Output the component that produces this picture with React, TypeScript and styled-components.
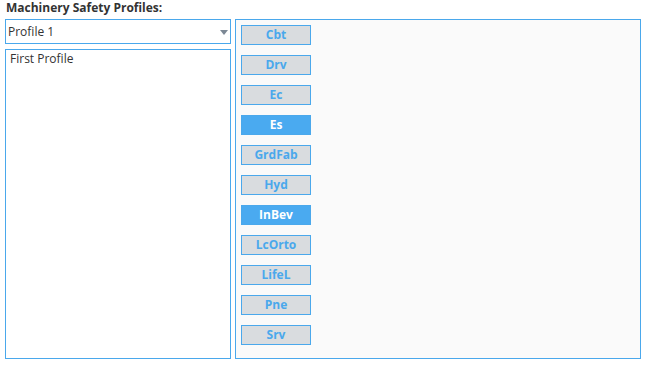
import React, { useState } from "react";
import styled, { createGlobalStyle } from "styled-components";

const Global = createGlobalStyle`
  html, body { margin: 0; padding: 0; background: #ffffff; }
  body { font-family: "Open Sans", "Noto Sans", sans-serif; }
`;

const Page = styled.div`
  padding: 0 5px;
  width: 647px;
  box-sizing: border-box;
`;

const Title = styled.div`
  font-size: 12px;
  font-weight: 700;
  color: #333333;
  line-height: 16px;
  height: 16px;
  padding-left: 1px;
  margin-bottom: 3px;
`;

const Row = styled.div`
  display: flex;
  gap: 4px;
`;

const LeftCol = styled.div`
  display: flex;
  flex-direction: column;
  gap: 5px;
  width: 226px;
`;

const SelectBox = styled.div`
  position: relative;
  height: 25px;
  box-sizing: border-box;
  border: 1px solid #4aa8ec;
  background: #ffffff;
  font-size: 12px;
  color: #333333;
  line-height: 23px;
  padding-left: 2px;
`;

const Arrow = styled.div`
  position: absolute;
  right: 2px;
  top: 10px;
  width: 0;
  height: 0;
  border-left: 4px solid transparent;
  border-right: 4px solid transparent;
  border-top: 5px solid #7c8895;
`;

const ListBox = styled.div`
  height: 310px;
  box-sizing: border-box;
  border: 1px solid #4aa8ec;
  background: #ffffff;
  padding: 1px 4px;
  font-size: 12px;
  color: #333333;
  line-height: 16px;
`;

const Panel = styled.div`
  width: 406px;
  height: 340px;
  box-sizing: border-box;
  border: 1px solid #4aa8ec;
  background: #fafafa;
  padding: 5px;
  display: flex;
  flex-direction: column;
  gap: 10px;
  align-items: flex-start;
`;

const ToggleButton = styled.div<{ $active: boolean }>`
  width: 70px;
  height: 20px;
  box-sizing: border-box;
  border: 1px solid #4aa8ec;
  background: ${(p) => (p.$active ? "#4aaaf0" : "#d9dcdf")};
  color: ${(p) => (p.$active ? "#ffffff" : "#4aa8ec")};
  font-size: 12px;
  font-weight: 700;
  line-height: 18px;
  text-align: center;
  cursor: pointer;
`;

const items = [
  { name: "Cbt", active: false },
  { name: "Drv", active: false },
  { name: "Ec", active: false },
  { name: "Es", active: true },
  { name: "GrdFab", active: false },
  { name: "Hyd", active: false },
  { name: "InBev", active: true },
  { name: "LcOrto", active: false },
  { name: "LifeL", active: false },
  { name: "Pne", active: false },
  { name: "Srv", active: false },
];

export default function App() {
  const [state, setState] = useState(items);
  return (
    <Page>
      <Global />
      <Title>Machinery Safety Profiles:</Title>
      <Row>
        <LeftCol>
          <SelectBox>
            Profile 1
            <Arrow />
          </SelectBox>
          <ListBox>First Profile</ListBox>
        </LeftCol>
        <Panel>
          {state.map((it, i) => (
            <ToggleButton
              key={it.name}
              $active={it.active}
              onClick={() =>
                setState((s) => s.map((x, j) => (j === i ? { ...x, active: !x.active } : x)))
              }
            >
              {it.name}
            </ToggleButton>
          ))}
        </Panel>
      </Row>
    </Page>
  );
}
